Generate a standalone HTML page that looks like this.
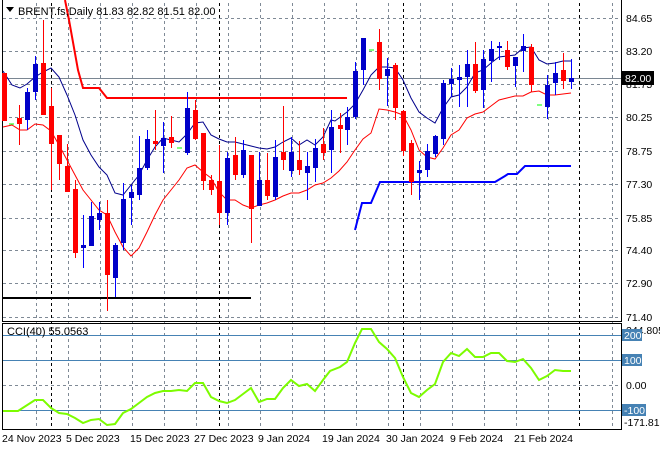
<!DOCTYPE html>
<html><head><meta charset="utf-8"><style>
html,body{margin:0;padding:0;background:#fff;}
svg{display:block;font-family:"Liberation Sans",sans-serif;}
</style></head><body>
<svg width="660" height="450" viewBox="0 0 660 450" xmlns="http://www.w3.org/2000/svg">
<rect width="660" height="450" fill="#fff"/>
<g stroke="#7f8a96" stroke-width="1" stroke-dasharray="3,3" fill="none">
<path d="M3 18.5H621M3 51.5H621M3 84.5H621M3 117.5H621M3 151.5H621M3 184.5H621M3 218.5H621M3 250.5H621M3 283.5H621M3 317.5H621M3 385.5H621"/>
<path d="M36.5 3V429M68.5 3V429M100.5 3V429M132.5 3V429M164.5 3V429M196.5 3V429M228.5 3V429M260.5 3V429M292.5 3V429M324.5 3V429M356.5 3V429M388.5 3V429M420.5 3V429M452.5 3V429M484.5 3V429M516.5 3V429M548.5 3V429M612.5 3V429"/>
</g>
<g stroke="#000" stroke-width="1" stroke-dasharray="3,3"><path d="M51.5 3V429M219.5 3V429M403.5 3V429M579.5 3V429"/></g>
<path d="M3 78.5H621" stroke="#7a8692" stroke-width="1"/>
<g stroke="#4682b4" stroke-width="1"><path d="M3 335.5H621M3 360.5H621M3 410.5H621"/></g>
<g stroke="#000" stroke-width="1" fill="none">
<path d="M2.5 0V321.5H621.5V0"/>
<path d="M2.5 323.5H621.5V429.5H2.5Z"/>
</g>
<polyline points="65,0 69,20 78,70 83,88 99,88 107,98 347,98" fill="none" stroke="#f00" stroke-width="2"/>
<polyline points="355,230 362,203 371,203 380,182 495,182 505,176 508,174 517,174 525,166 571,166" fill="none" stroke="#00f" stroke-width="2"/>
<path d="M3 298H251" stroke="#000" stroke-width="2"/>
<polyline fill="none" stroke="#00008b" stroke-width="1" points="3,71 12,85 20,88 27,84 35,77 43,72 51,68 59,77 67,95 75,115 83,140 91,155 99,167 107,175 115,193 123,195 131,185 139,175 147,160 155,147 163,138 171,140 179,142 187,134 195,123 203,122 211,135 219,139 227,142 235,142 243,144 251,146 259,148 267,149 275,147 283,142 291,138 299,145 307,140 315,145 323,137 331,120 335,121 347,112 355,104 363,90 371,75 379,67 387,67 395,68 403,80 411,98 419,112 427,118 435,123 443,108 451,97 459,95 467,87 475,73 483,70 491,63 499,57 507,56 515,55 523,48 531,47 539,60 547,64 555,63 563,61 571,61"/>
<polyline fill="none" stroke="#f00" stroke-width="1" points="3,127 12,125 20,130 27,130 35,124 43,125 51,131 59,145 67,160 75,175 83,190 91,200 99,210 107,215 115,232 123,247 131,256 139,248 147,232 155,215 163,200 171,190 179,180 187,168 195,165 203,172 211,178 219,192 227,200 235,200 243,205 251,208 259,205 267,203 275,200 283,196 291,193 299,193 307,190 315,185 323,183 331,178 339,171 347,162 355,150 363,139 371,133 379,109 387,110 395,112 403,115 411,130 419,150 427,157 435,159 443,148 451,135 459,130 467,118 475,114 483,112 491,106 499,100 507,98 515,96 523,96 531,92 539,91 547,95 555,95 563,94 571,93"/>
<g stroke="#0f0" stroke-width="1"><path d="M9 124H14M177 148H182M369 50H374M537 105H542"/></g>
<!-- red candles -->
<g stroke="#f00" stroke-width="1"><path d="M19.5 105V145M43.5 20V115M51.5 88V190M59.5 135V180M67.5 144V192M75.5 180V258M107.5 200V311M155.5 110V150M171.5 116V148M195.5 100V140M203.5 133V190M211.5 175V195M219.5 145V225M235.5 137V180M251.5 155V243M267.5 153V200M283.5 106V170M299.5 141V175M323.5 128V160M340.5 113V153M379.5 29V90M395.5 63V120M403.5 110V156M411.5 140V195M475.5 42V93M507.5 41V70M531.5 44V92M563.5 53V89"/></g>
<g fill="#f00">
<rect x="2" y="73" width="5" height="48"/><rect x="17" y="118" width="5" height="6"/><rect x="41" y="63" width="5" height="52"/><rect x="49" y="106" width="5" height="38"/><rect x="57" y="135" width="5" height="29"/><rect x="65" y="166" width="5" height="26"/><rect x="73" y="189" width="5" height="64"/><rect x="105" y="213" width="5" height="62"/><rect x="153" y="141" width="5" height="3"/><rect x="169" y="137" width="5" height="6"/><rect x="193" y="110" width="5" height="29"/><rect x="201" y="133" width="5" height="48"/><rect x="209" y="180" width="5" height="10"/><rect x="217" y="181" width="5" height="32"/><rect x="233" y="155" width="5" height="20"/><rect x="249" y="155" width="5" height="54"/><rect x="265" y="180" width="5" height="16"/><rect x="281" y="152" width="5" height="8"/><rect x="297" y="160" width="5" height="10"/><rect x="321" y="144" width="5" height="9"/><rect x="338" y="125" width="5" height="4"/><rect x="377" y="42" width="5" height="37"/><rect x="393" y="65" width="5" height="43"/><rect x="401" y="111" width="5" height="40"/><rect x="409" y="143" width="5" height="39"/><rect x="473" y="64" width="5" height="27"/><rect x="505" y="50" width="5" height="17"/><rect x="529" y="47" width="5" height="38"/><rect x="561" y="70" width="5" height="11"/>
</g>
<!-- blue candles -->
<g stroke="#00f" stroke-width="1"><path d="M27.5 88V130M35.5 56V100M83.5 215V268M91.5 202V246M99.5 202V230M115.5 243V297M123.5 183V250M131.5 185V225M139.5 136V200M147.5 130V170M163.5 122V173M187.5 92V155M227.5 152V225M243.5 140V178M259.5 152V206M275.5 140V200M291.5 137V177M307.5 152V200M315.5 139V182M331.5 110V173M347.5 107V145M355.5 62V119M363.5 38V85M387.5 58V106M419.5 161V200M427.5 144V177M435.5 135V157M443.5 80V145M451.5 68V97M459.5 65V107M467.5 50V107M483.5 50V108M491.5 41V82M499.5 42V60M515.5 57V87M523.5 34V72M547.5 75V119M555.5 62V95M571.5 59V89"/></g>
<g fill="#0000c8">
<rect x="25" y="92" width="5" height="28"/><rect x="33" y="64" width="5" height="28"/><rect x="81" y="245" width="5" height="3"/><rect x="89" y="216" width="5" height="30"/><rect x="97" y="213" width="5" height="7"/><rect x="113" y="245" width="5" height="33"/><rect x="121" y="199" width="5" height="44"/><rect x="129" y="192" width="5" height="6"/><rect x="137" y="168" width="5" height="27"/><rect x="145" y="139" width="5" height="29"/><rect x="161" y="138" width="5" height="8"/><rect x="185" y="108" width="5" height="45"/><rect x="225" y="158" width="5" height="55"/><rect x="241" y="150" width="5" height="25"/><rect x="257" y="180" width="5" height="26"/><rect x="273" y="157" width="5" height="40"/><rect x="289" y="152" width="5" height="19"/><rect x="305" y="166" width="5" height="7"/><rect x="313" y="148" width="5" height="20"/><rect x="329" y="127" width="5" height="23"/><rect x="345" y="117" width="5" height="13"/><rect x="353" y="71" width="5" height="46"/><rect x="361" y="38" width="5" height="32"/><rect x="385" y="69" width="5" height="7"/><rect x="417" y="170" width="5" height="3"/><rect x="425" y="151" width="5" height="19"/><rect x="433" y="136" width="5" height="18"/><rect x="441" y="83" width="5" height="56"/><rect x="449" y="79" width="5" height="5"/><rect x="457" y="77" width="5" height="3"/><rect x="465" y="64" width="5" height="13"/><rect x="481" y="59" width="5" height="31"/><rect x="489" y="49" width="5" height="12"/><rect x="497" y="46" width="5" height="2"/><rect x="513" y="57" width="5" height="9"/><rect x="521" y="46" width="5" height="5"/><rect x="545" y="85" width="5" height="22"/><rect x="553" y="73" width="5" height="10"/><rect x="569" y="78" width="5" height="4"/>
</g>
<polyline fill="none" stroke="#7cfc00" stroke-width="2" points="3,411 18,411 35,400 43,400 51,408 59,413 67,414 75,418 83,423 91,420 99,419 107,425 115,424 123,413 131,409 139,403 147,397 155,393 163,391 171,391 179,390 187,391 195,383 203,383 211,397 219,401 227,403 235,400 243,394 251,388 259,402 267,399 275,399 283,388 291,380 299,386 307,384 315,391 323,380 330,371 340,367 347,362 355,343 362,329 371,329 379,342 387,349 395,358 403,377 411,393 419,397 427,390 435,384 443,362 451,353 459,356 467,349 475,357 483,357 491,353 499,353 507,361 515,362 523,359 531,368 539,380 547,376 555,370 563,371 571,371"/>
<g font-size="11" fill="#000">
<path d="M6 7H14L10 12Z" fill="#000"/>
<text x="18" y="15">BRENT.fs,Daily  81.83 82.82 81.51 82.00</text>
<text x="7" y="335">CCI(40) 55.0563</text>
</g>
<g font-size="10.5" fill="#000">
<text x="626" y="22">84.65</text><text x="626" y="55">83.20</text><text x="626" y="88">81.75</text><text x="626" y="121">80.25</text><text x="626" y="155">78.75</text><text x="626" y="188">77.30</text><text x="626" y="222">75.85</text><text x="626" y="254">74.40</text><text x="626" y="287">72.90</text><text x="626" y="321">71.40</text>
<text x="626" y="334">244.8058</text><text x="626" y="389">0.00</text><text x="624" y="426">-171.815</text>
<text x="2" y="442">24 Nov 2023</text><text x="66" y="442">5 Dec 2023</text><text x="130" y="442">15 Dec 2023</text><text x="194" y="442">27 Dec 2023</text><text x="258" y="442">9 Jan 2024</text><text x="322" y="442">19 Jan 2024</text><text x="386" y="442">30 Jan 2024</text><text x="450" y="442">9 Feb 2024</text><text x="514" y="442">21 Feb 2024</text>
</g>
<rect x="622" y="71" width="32" height="14" fill="#000"/>
<text x="625" y="82" font-size="10.5" fill="#fff">82.00</text>
<g fill="#4682b4"><rect x="622" y="329" width="20" height="12"/><rect x="622" y="354" width="20" height="12"/><rect x="622" y="404" width="24" height="12"/></g>
<g font-size="10.5" fill="#fff"><text x="624" y="339">200</text><text x="624" y="364">100</text><text x="624" y="414">-100</text></g>
</svg>
</body></html>
